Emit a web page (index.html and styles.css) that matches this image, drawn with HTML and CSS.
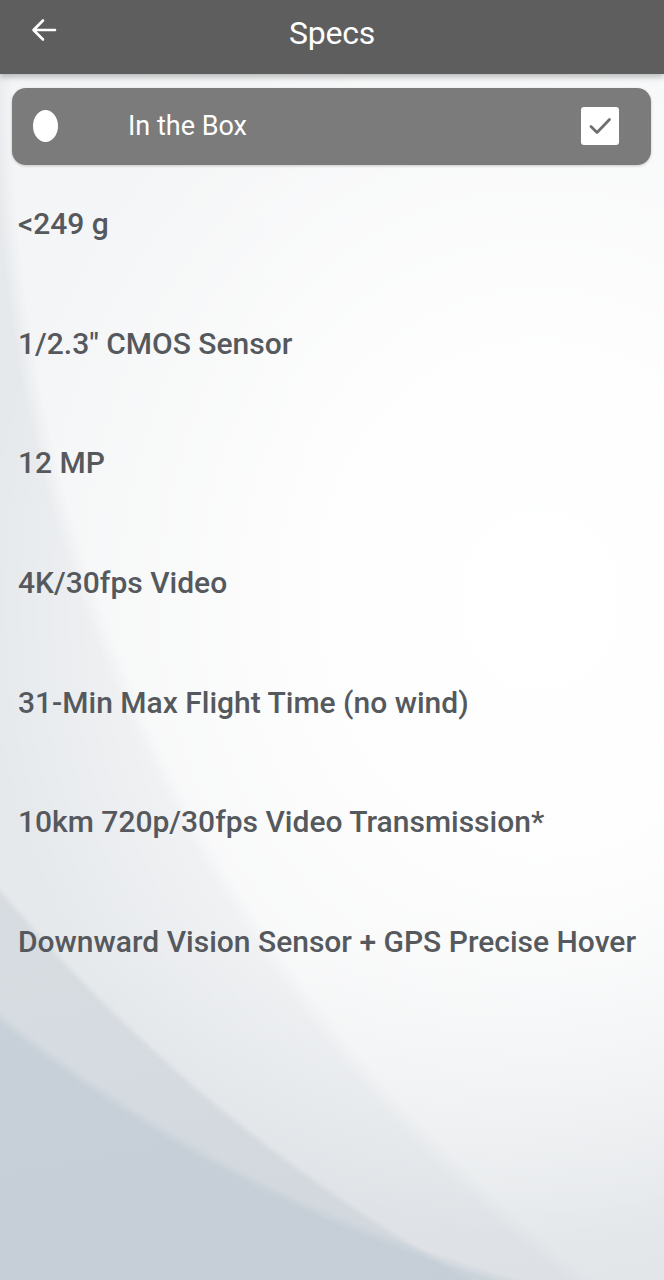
FILE: index.html
```html
<!DOCTYPE html>
<html>
<head>
<meta charset="utf-8">
<link rel="stylesheet" href="styles.css">
</head>
<body>
<div class="screen">
  <header class="topbar">
    <svg class="back" width="28" height="28" viewBox="0 0 28 28"><path d="M25 14H4M13 4.5L3.5 14L13 23.5" fill="none" stroke="#fff" stroke-width="2.6" stroke-linecap="round" stroke-linejoin="round"/></svg>
    <h1 class="title">Specs</h1>
  </header>
  <div class="card">
    <span class="dot"></span>
    <span class="card-label">In the Box</span>
    <span class="check">
      <svg width="26" height="26" viewBox="0 0 26 26"><path d="M4 13.5L10 19.5L22.5 6.5" fill="none" stroke="#6f6f6f" stroke-width="2.8" stroke-linecap="round" stroke-linejoin="round"/></svg>
    </span>
  </div>
  <ul class="specs">
    <li>&lt;249 g</li>
    <li>1/2.3" CMOS Sensor</li>
    <li>12 MP</li>
    <li>4K/30fps Video</li>
    <li>31-Min Max Flight Time (no wind)</li>
    <li>10km 720p/30fps Video Transmission*</li>
    <li>Downward Vision Sensor + GPS Precise Hover</li>
  </ul>
</div>
</body>
</html>
```
FILE: styles.css
```css
html, body {
  margin: 0;
  padding: 0;
}
body {
  width: 664px;
  height: 1280px;
  overflow: hidden;
  font-family: Roboto, "Noto Sans", sans-serif;
}
.screen {
  width: 664px;
  height: 1280px;
  overflow: hidden;
  background:
    radial-gradient(circle 1440px at 900px -100px, rgba(190,200,210,0) 0, rgba(190,200,210,0) 99.3%, rgba(190,201,211,0.6) 100%),
    radial-gradient(circle 1700px at 1300px -200px, rgba(255,255,255,0) 0, rgba(255,255,255,0) 99.6%, rgba(170,182,194,0.25) 100%),
    radial-gradient(ellipse 560px 640px at 540px 600px, rgba(255,255,255,1) 0, rgba(255,255,255,0.85) 40%, rgba(255,255,255,0) 100%),
    linear-gradient(170deg, rgba(255,255,255,0) 70%, rgba(214,219,224,0.6) 100%),
    radial-gradient(circle 1505px at 1500px 100px, #f7f8f9 0, #f4f5f6 98.8%, #e6e9ec 100%);
}
.topbar {
  height: 74px;
  background: #5e5e5e;
  display: flex;
  align-items: center;
  justify-content: center;
  position: relative;
  box-shadow: 0 3px 6px rgba(0,0,0,0.25);
}
.back {
  position: absolute;
  left: 30px;
  top: 16px;
}
.title {
  margin: 0 0 8px 0;
  color: #fff;
  font-weight: 400;
  font-size: 32px;
  letter-spacing: -0.2px;
}
.card {
  margin: 14px 13px 0 12px;
  height: 77px;
  background: #7b7b7b;
  border-radius: 14px;
  display: flex;
  align-items: center;
  box-shadow: 0 1px 3px rgba(0,0,0,0.2);
}
.dot {
  width: 25px;
  height: 32px;
  border-radius: 50%;
  background: #fff;
  margin-left: 21px;
  margin-top: -2px;
}
.card-label {
  margin-left: 70px;
  color: #fff;
  font-size: 27px;
  flex: 1;
  margin-top: -2px;
}
.check {
  width: 38px;
  height: 38px;
  background: #fff;
  border-radius: 3px;
  margin-right: 32px;
  display: flex;
  align-items: center;
  justify-content: center;
  margin-top: -2px;
}
.specs {
  list-style: none;
  margin: 0;
  padding: 0 0 0 18px;
}
.specs li {
  height: 119.7px;
  line-height: 34px;
  display: flex;
  align-items: center;
  color: #55595d;
  font-size: 30px;
  font-weight: 500;
  white-space: nowrap;
}
.specs li:first-child {
  margin-top: -1px;
}
```
